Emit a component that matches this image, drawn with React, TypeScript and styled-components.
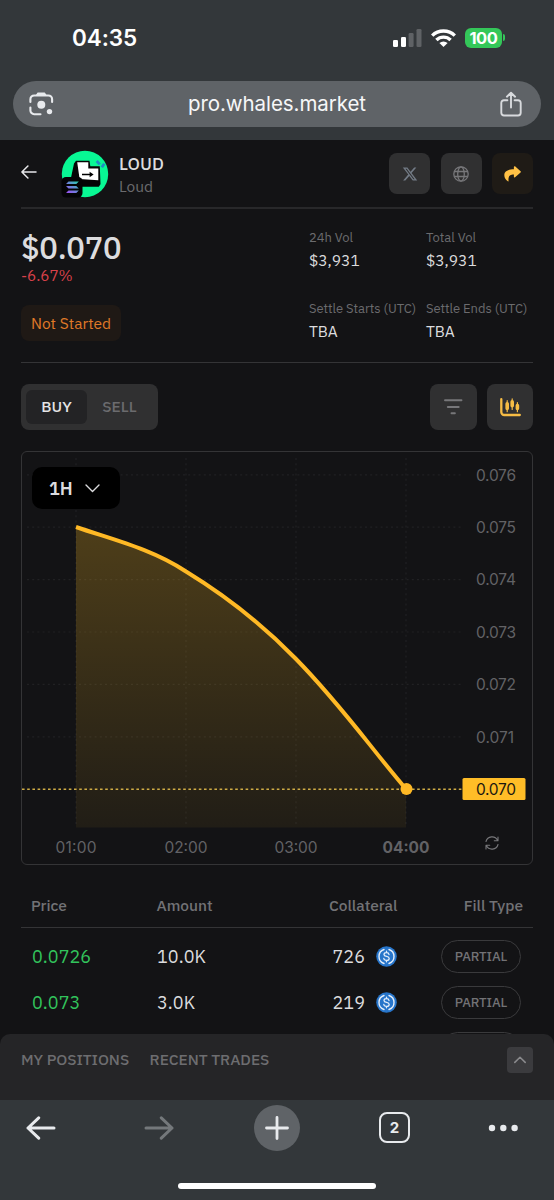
import React from 'react';
import styled, { createGlobalStyle } from 'styled-components';

const GlobalStyle = createGlobalStyle`
  * { box-sizing: border-box; }
  body { margin: 0; background: #131315; }
  svg { display: block; flex: none; }
`;

const PLEX = `'IBM Plex Sans', Roboto, 'Noto Sans', sans-serif`;
const SYSTEM = `Inter, 'Liberation Sans', sans-serif`;

const Screen = styled.div`
  width: 554px;
  height: 1200px;
  display: flex;
  flex-direction: column;
  overflow: hidden;
  background: #131315;
  font-family: ${PLEX};
`;

const BrowserTop = styled.header`
  height: 140px;
  flex: none;
  padding: 0 13px;
  background: #33373a;
  font-family: ${SYSTEM};
`;

const StatusBar = styled.div`
  height: 81px;
  padding: 0 36px 6px 59px;
  display: flex;
  align-items: center;
  justify-content: space-between;
`;

const Clock = styled.span`
  font-size: 22.5px;
  font-weight: 600;
  line-height: 28px;
  letter-spacing: -0.1px;
  color: #fff;
`;

const StatusIcons = styled.div`
  display: flex;
  align-items: center;
  gap: 9px;
`;

const BatteryWrap = styled.div`
  display: flex;
  align-items: center;
  gap: 1px;
  &::after {
    content: '';
    width: 2px;
    height: 7px;
    border-radius: 0 2px 2px 0;
    background: #34c759;
  }
`;

const Battery = styled.div`
  width: 37px;
  height: 20px;
  border-radius: 6px;
  background: #34c759;
  color: #fff;
  font-size: 16.5px;
  font-weight: 700;
  line-height: 20px;
  letter-spacing: -0.4px;
  text-align: center;
`;

const AddressBar = styled.div`
  height: 46px;
  border-radius: 23px;
  padding: 0 19px 0 15px;
  background: #5f6367;
  display: flex;
  align-items: center;
  justify-content: space-between;
`;

const Url = styled.span`
  font-size: 20.5px;
  line-height: 28px;
  letter-spacing: -0.07px;
  color: #f6f7f8;
`;

const Page = styled.main`
  flex: 1;
  min-height: 0;
  overflow: hidden;
  padding: 0 21px;
`;

const TokenHeader = styled.div`
  height: 69px;
  border-bottom: 2px solid #28282a;
  display: flex;
  align-items: center;
`;

const BackButton = styled.div`
  padding-bottom: 3px;
`;

const TokenLogo = styled.div`
  margin: 0 10px 0 24px;
`;

const TokenNames = styled.div`
  flex: 1;
  padding-top: 3px;
`;

const TokenSymbol = styled.div`
  font-size: 17.5px;
  font-weight: 500;
  line-height: 23px;
  letter-spacing: 0.1px;
  color: #dcdcde;
`;

const TokenName = styled.div`
  font-size: 15.5px;
  line-height: 23px;
  color: #6b6b6e;
`;

const LinkButtons = styled.div`
  display: flex;
  gap: 10.5px;
`;

const IconButton = styled.button<{ $size: number; $accent?: boolean }>`
  width: ${(p) => p.$size}px;
  height: ${(p) => (p.$size < 45 ? 41 : 46)}px;
  padding: 0;
  border: 0;
  border-radius: 8px;
  background: ${(p) => (p.$accent ? '#1f1b16' : '#303031')};
  display: flex;
  align-items: center;
  justify-content: center;
`;

const Summary = styled.section`
  height: 154px;
  border-bottom: 1px solid #343436;
  display: flex;
`;

const PriceColumn = styled.div`
  width: 288px;
  padding-top: 21px;
`;

const Price = styled.div`
  font-size: 31px;
  font-weight: 500;
  line-height: 35px;
  letter-spacing: -0.25px;
  color: #dcdcde;
`;

const Change = styled.div`
  font-size: 15.3px;
  line-height: 20px;
  letter-spacing: -0.05px;
  color: #d8414a;
`;

const StatusTag = styled.div`
  width: 100px;
  height: 36px;
  margin-top: 20px;
  border-radius: 8px;
  background: #1f1915;
  color: #e07a28;
  font-size: 15.5px;
  line-height: 36px;
  text-align: center;
`;

const Stats = styled.dl`
  margin: 0;
  padding-top: 18px;
  display: grid;
  grid-template-columns: 117px 107px;
  grid-auto-rows: 71px;
`;

const StatLabel = styled.dt`
  font-size: 13px;
  line-height: 22px;
  letter-spacing: -0.05px;
  color: #6b6b6e;
  white-space: nowrap;
`;

const StatValue = styled.dd`
  margin: 0;
  font-size: 15.5px;
  line-height: 22px;
  color: #dcdcde;
`;

const Toolbar = styled.div`
  height: 46px;
  margin: 21px 0;
  display: flex;
  gap: 10px;
`;

const Segmented = styled.div`
  width: 137px;
  padding: 6px 5px;
  margin-right: auto;
  border-radius: 8px;
  background: #303031;
  display: flex;
`;

const Segment = styled.button<{ $active?: boolean }>`
  width: ${(p) => (p.$active ? 61 : 65)}px;
  height: 34px;
  padding: 0 0 3px;
  border: 0;
  border-radius: 6px;
  background: ${(p) => (p.$active ? '#232325' : 'transparent')};
  color: ${(p) => (p.$active ? '#e4e4e6' : '#6b6b6e')};
  font-family: inherit;
  font-size: 15.5px;
  font-weight: 500;
`;

const ChartCard = styled.section`
  position: relative;
  height: 414px;
  border: 1px solid #343436;
  border-radius: 6px;
`;

const PeriodSelect = styled.button`
  position: absolute;
  left: 10px;
  top: 15px;
  width: 88px;
  height: 42px;
  padding: 0 20px 0 17px;
  border: 0;
  border-radius: 10px;
  background: #000;
  color: #dcdcde;
  display: flex;
  align-items: center;
  justify-content: space-between;
  font-family: inherit;
  font-size: 18px;
  font-weight: 600;
`;

const OfferRow = styled.div`
  height: 46px;
  padding: 0 12px 1px 11px;
  display: grid;
  grid-template-columns: 125px 110px 130px 1fr;
  align-items: center;
  font-size: 18px;
  letter-spacing: 0.05px;
  color: #dcdcde;
`;

const OfferHead = styled(OfferRow)`
  height: 63px;
  padding: 17px 10px 0;
  margin-bottom: 6px;
  grid-template-columns: 125.5px 110px 131px 1fr;
  border-bottom: 1px solid #343436;
  font-size: 15.5px;
  font-weight: 500;
  letter-spacing: -0.02px;
  color: #727275;
`;

const RightCell = styled.span`
  display: flex;
  align-items: center;
  justify-content: flex-end;
  gap: 11px;
`;

const PriceCell = styled.span`
  color: #32c45c;
`;

const FillPill = styled.span`
  width: 80px;
  height: 33px;
  border: 1px solid #3a3a3c;
  border-radius: 17px;
  color: #727275;
  font-size: 13.2px;
  font-weight: 500;
  line-height: 31px;
  letter-spacing: -0.1px;
  text-align: center;
`;

const Drawer = styled.section`
  height: 66px;
  flex: none;
  padding: 13px 21px;
  border-radius: 10px 10px 0 0;
  background: #252527;
  display: flex;
  gap: 20.5px;
`;

const DrawerTab = styled.span`
  font-size: 15.5px;
  font-weight: 500;
  line-height: 25px;
  letter-spacing: -0.06px;
  color: #6d6d70;
`;

const ExpandButton = styled.button`
  width: 26px;
  height: 26px;
  margin-left: auto;
  padding: 0;
  border: 0;
  border-radius: 4px;
  background: #3b3b3e;
  display: flex;
  align-items: center;
  justify-content: center;
`;

const BrowserBottom = styled.footer`
  height: 100px;
  flex: none;
  background: #33373a;
  font-family: ${SYSTEM};
`;

const NavRow = styled.nav`
  height: 55px;
  padding-left: 26px;
  display: grid;
  grid-template-columns: 118px 110px 125px 109px 1fr;
  align-items: center;
`;

const NewTab = styled.div`
  width: 46px;
  height: 46px;
  border-radius: 50%;
  background: #5f6367;
  display: flex;
  align-items: center;
  justify-content: center;
`;

const TabCount = styled.div`
  width: 31px;
  height: 31px;
  border: 2.5px solid #e8eaed;
  border-radius: 8px;
  color: #e8eaed;
  font-size: 15px;
  font-weight: 700;
  line-height: 27px;
  text-align: center;
`;

const HomeIndicator = styled.div`
  width: 198px;
  height: 6px;
  margin: 28px auto 0;
  border-radius: 3px;
  background: #fff;
`;

const LensIcon = () => (
  <svg width="26" height="26" viewBox="0 0 26 26" fill="none" stroke="#e8eaed" strokeWidth="2.1">
    <path d="M2.4 11V8.2A3.7 3.7 0 0 1 6.1 4.5h14.3a3.7 3.7 0 0 1 3.7 3.7V11M2.4 16.5v3a3.7 3.7 0 0 0 3.7 3.7H12.5" strokeLinecap="round" />
    <path d="M8.6 4 9.9 2h6.6L17.8 4z" fill="#e8eaed" strokeWidth="1.2" strokeLinejoin="round" />
    <circle cx="13.3" cy="13.7" r="4" fill="#e8eaed" stroke="none" />
    <circle cx="21.5" cy="20.6" r="2.7" fill="#e8eaed" stroke="none" />
  </svg>
);

const ShareIcon = () => (
  <svg width="22" height="26" viewBox="0 0 22 26" fill="none" stroke="#d8dadd" strokeWidth="1.9" strokeLinecap="round" strokeLinejoin="round">
    <path d="M7.4 9.2H4A2.7 2.7 0 0 0 1.3 12v9.8A2.7 2.7 0 0 0 4 24.5h14a2.7 2.7 0 0 0 2.7-2.7V12A2.7 2.7 0 0 0 18 9.2h-3.4M11 16.5V2M6.9 5.7 11 1.7l4.1 4" />
  </svg>
);

const SignalIcon = () => (
  <svg width="29" height="18" viewBox="0 0 29 18">
    <rect x="0" y="11" width="5" height="7" rx="1.3" fill="#fff" />
    <rect x="8" y="8" width="5" height="10" rx="1.3" fill="#fff" />
    <rect x="15.6" y="4" width="5" height="14" rx="1.3" fill="#5f6265" />
    <rect x="23.5" y="0" width="5" height="18" rx="1.3" fill="#5f6265" />
  </svg>
);

const WifiIcon = () => (
  <svg width="25" height="18" viewBox="0 0 25 18" fill="none" stroke="#fff" strokeWidth="3.4">
    <path d="M1.2 6.600a16.200 16.200 0 0 1 22.600 0M5.400 11a10.200 10.200 0 0 1 14.200 0" />
    <path d="M8.400 14a6 6 0 0 1 8.200 0l-4.100 4z" fill="#fff" stroke="none" />
  </svg>
);

const BackArrow = () => (
  <svg width="16" height="14" viewBox="0 0 16 14" fill="none" stroke="#e8e8ea" strokeWidth="1.5" strokeLinecap="round" strokeLinejoin="round">
    <path d="M15 7H.9M6.900 1 .9 7l6 6" />
  </svg>
);

const LoudLogo = () => (
  <svg width="48" height="48" viewBox="0 0 48 48">
    <defs>
      <linearGradient id="sol" x1="0" y1="1" x2="1" y2="0">
        <stop offset="0" stopColor="#a04bf5" />
        <stop offset="0.5" stopColor="#6a84d8" />
        <stop offset="1" stopColor="#25d6ad" />
      </linearGradient>
    </defs>
    <circle cx="24" cy="24" r="23.2" fill="#08f894" />
    <path d="M13 13.500l2-2.800h13.500l.8 5.600h9.500l.7 18-1.700 2.500H18l-8-9z" fill="#050505" />
    <path d="M16.200 12.200h11.100v6.400h10v11.700l-18.700-1.300z" fill="#fff" />
    <path d="M21 24.500h8.500" stroke="#000" strokeWidth="1.5" />
    <path d="M28.600 21.700l4 2.800-4 2.800z" fill="#000" />
    <path d="M35.700 11l3 3.400M40.800 17.300l2.500-3.600" stroke="#218bc4" strokeWidth="2.8" />
    <rect x=".5" y="27" width="21" height="20.5" rx="4.5" fill="#040405" />
    <path d="M7.500 31.500h10.300l-2.500 2.600H5zM5 36h10.300l2.500 2.600H7.500zM7.500 40.500h10.300l-2.500 2.600H5z" fill="url(#sol)" />
  </svg>
);

const XIcon = () => (
  <svg width="16" height="16" viewBox="0 0 24 24" fill="#737b86">
    <path d="M18.244 2.25h3.308l-7.227 8.26 8.502 11.24H16.17l-5.214-6.817L4.99 21.75H1.68l7.73-8.835L1.254 2.25H8.08l4.713 6.231zm-1.161 17.52h1.833L7.084 4.126H5.117z" />
  </svg>
);

const GlobeIcon = () => (
  <svg width="16" height="16" viewBox="0 0 16 16" fill="none" stroke="#77777a" strokeWidth="1.3">
    <circle cx="8" cy="8" r="7.2" />
    <ellipse cx="8" cy="8" rx="3.3" ry="7.2" />
    <path d="M1.300 5.500h13.400M1.300 10.500h13.400" />
  </svg>
);

const ForwardIcon = () => (
  <svg width="17" height="16" viewBox="0 0 16 15" fill="#ffc145">
    <path d="M9.300.8c0-.6.7-.9 1.100-.5l5.200 4.500c.4.4.4.8 0 1.200l-5.200 4.600c-.5.4-1.100.1-1.100-.5V8C6 8 3.700 9 4.300 14.200c0 .4-.4.5-.7.2C1.400 12.700.3 10.800.3 8.700.3 4.300 4.200 3.200 9.300 3.100z" />
  </svg>
);

const FilterIcon = () => (
  <svg width="19" height="16" viewBox="0 0 19 16" stroke="#77777a" strokeWidth="1.9" strokeLinecap="round">
    <path d="M1 1.300h16.500M3.800 8h10.900M7.500 14.200h3.400" />
  </svg>
);

const CandlesIcon = () => (
  <svg width="21" height="19" viewBox="0 0 21 19" fill="none" stroke="#f7bd45" strokeLinecap="round">
    <path d="M1.300 1.200V14a3 3 0 0 0 3 3H19.800" strokeWidth="2.3" />
    <path d="M7.200 2.700v11M12.200.9v10.600M17.400 4.500v9.200" strokeWidth="1.2" />
    <path d="M7.200 5.800v4.600M12.200 3.800v4M17.400 7.500v2.900" strokeWidth="3.6" />
  </svg>
);

const UsdcIcon = () => (
  <svg width="21" height="21" viewBox="0 0 21 21" fill="none" stroke="#e4eefa" strokeLinecap="round">
    <circle cx="10.5" cy="10.5" r="10.3" fill="#2775ca" stroke="none" />
    <path d="M8 3.500a7.400 7.400 0 0 0 0 14M13 3.500a7.400 7.400 0 0 1 0 14" strokeWidth="1.4" />
    <path d="M13 8.500c-.2-1.300-1.100-1.900-2.500-1.900S8 7.200 8 8.400c0 2.900 5.200 1.200 5.200 4.100 0 1.300-1.200 1.900-2.700 1.900S8 13.800 7.800 12.500M10.500 5.200v1.400M10.500 14.400v1.400" strokeWidth="1.3" />
  </svg>
);

const Chevron = ({ up, w, color, stroke }: { up?: boolean; w: number; color: string; stroke: number }) => (
  <svg width={w} height={w * 0.6} viewBox="0 0 15 9" fill="none" stroke={color} strokeWidth={stroke} strokeLinecap="round" strokeLinejoin="round">
    <path d={up ? 'M1 8l6.500-6.500L14 8' : 'M1 1l6.500 6.500L14 1'} />
  </svg>
);

const NavArrow = ({ right }: { right?: boolean }) => (
  <svg width="30" height="24" viewBox="0 0 30 24" fill="none" stroke={right ? '#74787b' : '#e8eaed'} strokeWidth="3" strokeLinecap="round" strokeLinejoin="round">
    <path d={right ? 'M2 12h26M17.300 1.800 28 12 17.300 22.200' : 'M28 12H2M12.700 1.800 2 12l10.700 10.200'} />
  </svg>
);

const PRICES = ['0.076', '0.075', '0.074', '0.073', '0.072', '0.071'];
const HOURS = ['01:00', '02:00', '03:00', '04:00'];
const CURVE = 'M54 75C92 88 130 97 164 119.500C204 144 240 172 274 207C320 254 348 295 384 337';

const PriceChart = () => (
  <svg width="510" height="412" viewBox="0 0 510 412" fontFamily="Inter, 'Liberation Sans', sans-serif" fontSize="15.5">
    <defs>
      <linearGradient id="area" x1="0" y1="75" x2="0" y2="375" gradientUnits="userSpaceOnUse">
        <stop offset="0" stopColor="#ffbf26" stopOpacity="0.25" />
        <stop offset="1" stopColor="#ffbf26" stopOpacity="0.06" />
      </linearGradient>
    </defs>
    <g stroke="#212123" strokeWidth="1.2" strokeDasharray="2 3.2">
      {PRICES.map((p, i) => (
        <line key={p} x1="5" x2="441" y1={22.8 + i * 52.4} y2={22.8 + i * 52.4} />
      ))}
      {HOURS.map((h, i) => (
        <line key={h} x1={54 + i * 110} x2={54 + i * 110} y1="6" y2="375" />
      ))}
    </g>
    <path d={`${CURVE}V375.500H54Z`} fill="url(#area)" />
    <path d="M0 337.300H441" stroke="#cfac45" strokeWidth="1.5" strokeDasharray="2.6 2.6" />
    <path d={CURVE} fill="none" stroke="#ffb925" strokeWidth="4" />
    <circle cx="384.5" cy="337" r="6" fill="#ffb925" />
    <rect x="440.5" y="326" width="63" height="22" rx="1.5" fill="#ffbd27" />
    <g fill="#626265">
      {PRICES.map((p, i) => (
        <text key={p} x="454" y={28.5 + i * 52.4} textLength={p === '0.071' ? 38 : 40}>{p}</text>
      ))}
      {HOURS.map((h, i) => (
        <text key={h} x={54 + i * 110} y="400.5" textAnchor="middle" textLength={[41, 43, 43, 47][i]} fontWeight={i === 3 ? 700 : 400}>{h}</text>
      ))}
    </g>
    <text x="454" y="343" textLength="40" fill="#1b1710">0.070</text>
    <g transform="translate(463 384)" fill="none" stroke="#77777a" strokeWidth="1.1" strokeLinecap="round" strokeLinejoin="round">
      <path d="M1 5.500A6.200 6.200 0 0 1 12.600 4.400M13 1v3.700H9.300M13 8.500A6.200 6.200 0 0 1 1.400 9.600M1 13V9.300h3.700" />
    </g>
  </svg>
);

const STATS = [
  ['24h Vol', '$3,931'],
  ['Total Vol', '$3,931'],
  ['Settle Starts (UTC)', 'TBA'],
  ['Settle Ends (UTC)', 'TBA'],
];

const OFFERS = [
  { price: '0.0726', amount: '10.0K', collateral: '726' },
  { price: '0.073', amount: '3.0K', collateral: '219' },
];

export default function App() {
  return (
    <Screen>
      <GlobalStyle />
      <BrowserTop>
        <StatusBar>
          <Clock>04:35</Clock>
          <StatusIcons>
            <SignalIcon />
            <WifiIcon />
            <BatteryWrap><Battery>100</Battery></BatteryWrap>
          </StatusIcons>
        </StatusBar>
        <AddressBar>
          <LensIcon />
          <Url>pro.whales.market</Url>
          <ShareIcon />
        </AddressBar>
      </BrowserTop>

      <Page>
        <TokenHeader>
          <BackButton><BackArrow /></BackButton>
          <TokenLogo><LoudLogo /></TokenLogo>
          <TokenNames>
            <TokenSymbol>LOUD</TokenSymbol>
            <TokenName>Loud</TokenName>
          </TokenNames>
          <LinkButtons>
            <IconButton $size={41} aria-label="X"><XIcon /></IconButton>
            <IconButton $size={41} aria-label="Website"><GlobeIcon /></IconButton>
            <IconButton $size={41} $accent aria-label="Share"><ForwardIcon /></IconButton>
          </LinkButtons>
        </TokenHeader>

        <Summary>
          <PriceColumn>
            <Price>$0.070</Price>
            <Change>-6.67%</Change>
            <StatusTag>Not Started</StatusTag>
          </PriceColumn>
          <Stats>
            {STATS.map(([label, value]) => (
              <div key={label}>
                <StatLabel>{label}</StatLabel>
                <StatValue>{value}</StatValue>
              </div>
            ))}
          </Stats>
        </Summary>

        <Toolbar>
          <Segmented>
            <Segment $active>BUY</Segment>
            <Segment>SELL</Segment>
          </Segmented>
          <IconButton $size={47} aria-label="Filter"><FilterIcon /></IconButton>
          <IconButton $size={46} aria-label="Chart"><CandlesIcon /></IconButton>
        </Toolbar>

        <ChartCard>
          <PriceChart />
          <PeriodSelect>
            1H
            <Chevron w={15} color="#dcdcde" stroke={1.4} />
          </PeriodSelect>
        </ChartCard>

        <OfferHead>
          <span>Price</span>
          <span>Amount</span>
          <RightCell>Collateral</RightCell>
          <RightCell>Fill Type</RightCell>
        </OfferHead>
        {OFFERS.map((o) => (
          <OfferRow key={o.price}>
            <PriceCell>{o.price}</PriceCell>
            <span>{o.amount}</span>
            <RightCell>{o.collateral}<UsdcIcon /></RightCell>
            <RightCell><FillPill>PARTIAL</FillPill></RightCell>
          </OfferRow>
        ))}
        <OfferRow>
          <span /><span /><span />
          <RightCell><FillPill /></RightCell>
        </OfferRow>
      </Page>

      <Drawer>
        <DrawerTab>MY POSITIONS</DrawerTab>
        <DrawerTab>RECENT TRADES</DrawerTab>
        <ExpandButton aria-label="Expand"><Chevron up w={12} color="#8a8a8d" stroke={1.9} /></ExpandButton>
      </Drawer>

      <BrowserBottom>
        <NavRow>
          <NavArrow />
          <NavArrow right />
          <NewTab>
            <svg width="24" height="24" viewBox="0 0 24 24" stroke="#e8eaed" strokeWidth="2.8" strokeLinecap="round">
              <path d="M12 1.500v21M1.500 12h21" />
            </svg>
          </NewTab>
          <TabCount>2</TabCount>
          <svg width="30" height="8" viewBox="0 0 30 8" fill="#e8eaed">
            <circle cx="4" cy="4" r="3.2" />
            <circle cx="15.3" cy="4" r="3.2" />
            <circle cx="26.6" cy="4" r="3.2" />
          </svg>
        </NavRow>
        <HomeIndicator />
      </BrowserBottom>
    </Screen>
  );
}
